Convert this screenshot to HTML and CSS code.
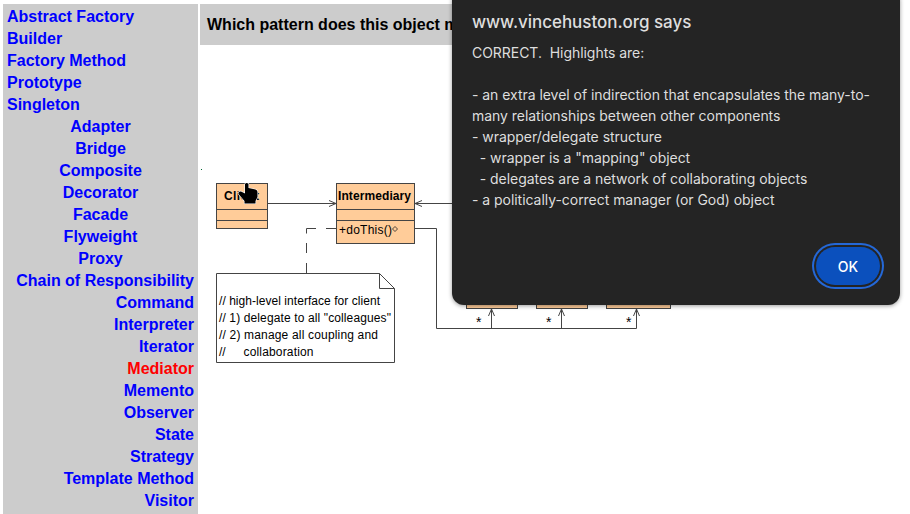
FILE: index.html
```html
<!DOCTYPE html>
<html lang="en">
<head>
<meta charset="utf-8">
<title>Design patterns quiz</title>
<link rel="stylesheet" href="styles.css">
</head>
<body>
<div class="page">
  <nav class="patterns">
    <ul class="creational">
      <li>Abstract Factory</li><li>Builder</li><li>Factory Method</li><li>Prototype</li><li>Singleton</li>
    </ul>
    <ul class="structural">
      <li>Adapter</li><li>Bridge</li><li>Composite</li><li>Decorator</li><li>Facade</li><li>Flyweight</li><li>Proxy</li>
    </ul>
    <ul class="behavioral">
      <li>Chain of Responsibility</li><li>Command</li><li>Interpreter</li><li>Iterator</li><li class="selected">Mediator</li><li>Memento</li><li>Observer</li><li>State</li><li>Strategy</li><li>Template Method</li><li>Visitor</li>
    </ul>
  </nav>
  <main class="content">
    <h1 class="question">Which pattern does this object m</h1>
    <svg class="diagram" width="710" height="469" viewBox="200 45 710 469">
      <rect x="201" y="169" width="1" height="1" fill="#063"/>
      <g class="box">
        <rect x="216.5" y="183.500" width="51" height="45"/>
        <path d="M216.500 209.500h51M216.500 220.500h51"/>
        <rect x="336.500" y="183.500" width="78" height="60"/>
        <path d="M336.500 209.500h78M336.500 220.500h78"/>
        <rect x="466.500" y="263.500" width="51" height="45"/>
        <rect x="536.500" y="263.500" width="51" height="45"/>
        <rect x="606.500" y="263.500" width="64" height="45"/>
      </g>
      <g class="line">
        <path d="M268 203.500h68M329 200.500l7 3-7 3"/>
        <path d="M460 203.500h-45M422 200.500l-7 3 7 3"/>
        <path d="M415 228.500h21.500v100h200V309M491.500 328V309M561.500 328V309"/>
        <path d="M488.500 316l3-7 3 7M558.500 316l3-7 3 7M633.500 316l3-7 3 7"/>
        <path d="M336 228.500h-10M316 228.500h-9.500v5M306.500 243v10M306.500 263v10"/>
        <path d="M216.500 273.500h163l15 15v74h-178zM379.500 273.500v15h15"/>
      </g>
      <g class="name">
        <text x="224" y="200" textLength="35">Client</text>
        <text x="338" y="200" textLength="73">Intermediary</text>
      </g>
      <g class="label">
        <text x="339" y="234" textLength="53">+doThis()</text>
        <path d="M392.500 229l2.500-2.500 2.500 2.500-2.500 2.500z" fill="none" stroke="#222" stroke-width=".8"/>
        <text x="219" y="305" textLength="161">// high-level interface for client</text>
        <text x="219" y="322" textLength="172">// 1) delegate to all "colleagues"</text>
        <text x="219" y="339" textLength="159">// 2) manage all coupling and</text>
        <text x="219" y="356">//</text>
        <text x="243.500" y="356" textLength="70">collaboration</text>
        <text class="many" x="476" y="327">*</text>
        <text class="many" x="546" y="327">*</text>
        <text class="many" x="626" y="327">*</text>
      </g>
      <path class="cursor" d="M245 184q1.500-2 3.500 0v4l7 1.500q2 .5 2 2.500v5l-2 4v2.500h-11v-2.500l-6-7q-.5-3 2.500-2.500l4 2z"/>
    </svg>
  </main>
</div>
<section class="dialog" role="dialog">
  <h2 class="origin">www.vincehuston.org says</h2>
  <div class="message"><p>CORRECT.  Highlights are:</p><p>&nbsp;</p><p>- an extra level of indirection that encapsulates the many-to-</p><p>many relationships between other components</p><p>- wrapper/delegate structure</p><p>  - wrapper is a "mapping" object</p><p>  - delegates are a network of collaborating objects</p><p>- a politically-correct manager (or God) object</p></div>
  <div class="actions"><button class="ok">OK</button></div>
</section>
</body>
</html>
```
FILE: styles.css
```css
* { box-sizing: border-box; }
body {
  margin: 0;
  height: 514px;
  overflow: hidden;
  background: #fff;
  font-family: "Liberation Sans", Arial, sans-serif;
}
.page {
  display: grid;
  grid-template-columns: 195px 710px;
  gap: 2px;
  padding: 4px 0 0 3px;
  height: 514px;
}
.patterns {
  background: #ccc;
  padding: 2px 4px 0;
  color: #00f;
  font-size: 16px;
  font-weight: bold;
  line-height: 22px;
}
.patterns ul { list-style: none; margin: 0; padding: 0; white-space: nowrap; }
.structural { text-align: center; }
.behavioral { text-align: right; }
.patterns .selected { color: #f00; }
.question {
  margin: 0;
  width: 600px;
  height: 41px;
  padding-left: 7px;
  background: #ccc;
  font-size: 16px;
  line-height: 41px;
}
.diagram { display: block; }
.box { fill: #fc9; stroke: #444; }
.line { fill: none; stroke: #444; }
.name { font-size: 12px; font-weight: bold; }
.label { font-size: 12px; }
.many { font-size: 14px; }
.cursor { fill: #000; stroke: #fff; stroke-width: 1.2; paint-order: stroke; }
.dialog {
  position: absolute;
  left: 452px;
  top: -11px;
  width: 448px;
  height: 316px;
  padding: 21px 20px 20px;
  display: flex;
  flex-direction: column;
  border-radius: 12px;
  background: #242424;
  color: #dedede;
  box-shadow: 0 1px 4px rgba(0, 0, 0, .4);
  font-family: Inter, sans-serif;
}
.origin {
  margin: 0;
  font-size: 17px;
  font-weight: 500;
  line-height: 24px;
  letter-spacing: -.04px;
}
.message {
  margin-top: 8px;
  font-size: 14px;
  line-height: 21px;
  letter-spacing: -.04px;
  white-space: pre;
}
.message p { margin: 0; }
.actions { margin-top: auto; display: flex; justify-content: flex-end; }
.ok {
  width: 64px;
  height: 38px;
  border: 0;
  border-radius: 19px;
  background: #0b50bd;
  box-shadow: 0 0 0 2px #242424, 0 0 0 4px #2468d8;
  color: #fff;
  font: 500 14px Inter, sans-serif;
}
```
